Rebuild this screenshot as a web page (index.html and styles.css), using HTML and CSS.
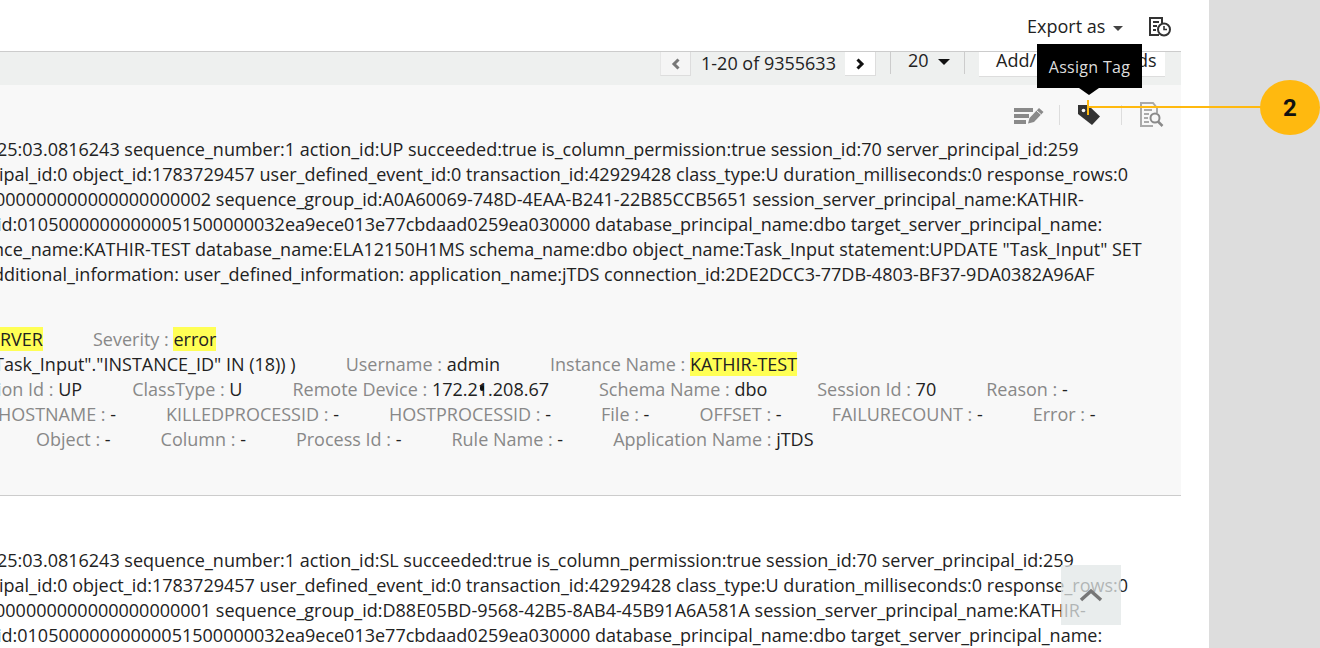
FILE: index.html
```html
<!DOCTYPE html>
<html lang="en">
<head>
<meta charset="utf-8">
<title>Log search</title>
<link rel="stylesheet" href="styles.css">
</head>
<body>
<div class="page">
  <main class="main">
    <header class="top">
      <span class="export">Export as <i class="caret"></i></span>
      <svg class="sched" width="24" height="22" viewBox="0 0 24 22"><path d="M11 19H2V2h12v5" fill="none" stroke="#333" stroke-width="2"/><path d="M5 6h6M5 10h4M5 14h3" stroke="#333" stroke-width="2"/><circle cx="16" cy="13.500" r="6" fill="#fff" stroke="#333" stroke-width="2"/><path d="M16 10v3.500h3" fill="none" stroke="#333" stroke-width="1.600"/></svg>
    </header>
    <div class="toolbar">
      <button class="pg pg-off"><svg width="10" height="12" viewBox="0 0 10 12"><path d="M7.500 1.500 3 6l4.500 4.500" fill="none" stroke="#777" stroke-width="3"/></svg></button>
      <span class="count">1-20 of 9355633</span>
      <button class="pg"><svg width="10" height="12" viewBox="0 0 10 12"><path d="M2.500 1.500 7 6l-4.500 4.500" fill="none" stroke="#111" stroke-width="3"/></svg></button>
      <span class="sep sep-a"></span>
      <span class="size">20<i class="caret caret-dark"></i></span>
      <span class="sep sep-b"></span>
      <button class="fields">Add/Remove Fields</button>
    </div>
    <section class="rec-a">
      <div class="actions">
        <svg class="edit" width="30" height="20" viewBox="0 0 30 20"><path d="M0 3h19v4H0zM0 9h15v4H0zM0 15h12v4H0z" fill="#8a8a8a"/><path d="M14 18.500l1.500-5.500L25 3l4.500 4-9.500 10z" fill="#8a8a8a"/><path d="M22.500 5.500l4.500 4" stroke="#f8f8f8" stroke-width="1"/></svg>
        <span class="vline"></span>
        <svg class="tag" width="24" height="24" viewBox="0 0 24 24"><path d="M1 2h10l12 11.500-8 8.500L1 11z" fill="#333"/><circle cx="6.500" cy="7.500" r="1.800" fill="#f8f8f8"/></svg>
        <span class="vline"></span>
        <svg width="26" height="28" viewBox="0 0 26 28"><path d="M14 25H2V2h12l4 5v5" fill="none" stroke="#aaa" stroke-width="2"/><path d="M5 9h8M5 13h5M5 17h4M5 21h5" stroke="#aaa" stroke-width="2"/><circle cx="16" cy="17" r="4.500" fill="none" stroke="#8a8a8a" stroke-width="2"/><path d="M19 20.500l4.500 4.500" stroke="#8a8a8a" stroke-width="2.500"/></svg>
      </div>
      <div class="msg">
        <p class="l1">25:03.0816243 sequence_number:1 action_id:UP succeeded:true is_column_permission:true session_id:70 server_principal_id:259</p>
        <p class="l2">ipal_id:0 object_id:1783729457 user_defined_event_id:0 transaction_id:42929428 class_type:U duration_milliseconds:0 response_rows:0</p>
        <p class="l3">000000000000000000002 sequence_group_id:A0A60069-748D-4EAA-B241-22B85CCB5651 session_server_principal_name:KATHIR-</p>
        <p class="l4">id:01050000000000051500000032ea9ece013e77cbdaad0259ea030000 database_principal_name:dbo target_server_principal_name:</p>
        <p class="l5">nce_name:KATHIR-TEST database_name:ELA12150H1MS schema_name:dbo object_name:Task_Input statement:UPDATE "Task_Input" SET</p>
        <p class="l6">dditional_information: user_defined_information: application_name:jTDS connection_id:2DE2DCC3-77DB-4803-BF37-9DA0382A96AF</p>
      </div>
      <div class="fieldset">
        <div class="row r1"><span><mark>RVER</mark></span><span><b>Severity : </b><mark>error</mark></span></div>
        <div class="row r2"><span>Task_Input"."INSTANCE_ID" IN (18)) )</span><span><b>Username : </b>admin</span><span><b>Instance Name : </b><mark>KATHIR-TEST</mark></span></div>
        <div class="row r3"><span><b>ion Id : </b>UP</span><span><b>ClassType : </b>U</span><span><b>Remote Device : </b>172.21.208.67</span><span><b>Schema Name : </b>dbo</span><span><b>Session Id : </b>70</span><span><b>Reason : </b>-</span></div>
        <div class="row"><span><b>HOSTNAME : </b>-</span><span><b>KILLEDPROCESSID : </b>-</span><span><b>HOSTPROCESSID : </b>-</span><span><b>File : </b>-</span><span><b>OFFSET : </b>-</span><span><b>FAILURECOUNT : </b>-</span><span><b>Error : </b>-</span></div>
        <div class="row r5"><span><b>Object : </b>-</span><span><b>Column : </b>-</span><span><b>Process Id : </b>-</span><span><b>Rule Name : </b>-</span><span><b>Application Name : </b>jTDS</span></div>
      </div>
    </section>
    <section class="rec-b">
      <div class="msg">
        <p class="l1">25:03.0816243 sequence_number:1 action_id:SL succeeded:true is_column_permission:true session_id:70 server_principal_id:259</p>
        <p class="l2">ipal_id:0 object_id:1783729457 user_defined_event_id:0 transaction_id:42929428 class_type:U duration_milliseconds:0 response_rows:0</p>
        <p class="l3">000000000000000000001 sequence_group_id:D88E05BD-9568-42B5-8AB4-45B91A6A581A session_server_principal_name:KATHIR-</p>
        <p class="l4">id:01050000000000051500000032ea9ece013e77cbdaad0259ea030000 database_principal_name:dbo target_server_principal_name:</p>
      </div>
    </section>
  </main>
  <aside class="rail"></aside>
</div>
<div class="speck"></div>
<div class="tip">Assign Tag</div>
<div class="leader"></div>
<div class="leader-v"></div>
<div class="badge">2</div>
<button class="totop"><svg width="24" height="14" viewBox="0 0 24 14"><path d="M2 12 12 3l10 9" fill="none" stroke="#777" stroke-width="3.500"/></svg></button>
</body>
</html>
```
FILE: styles.css
```css
* { box-sizing: border-box; }
html, body { margin: 0; height: 100%; overflow: hidden; }
body { font-family: "Open Sans", sans-serif; font-size: 18px; color: #222; background: #fff; }
.page { display: flex; height: 648px; }
.main { width: 1181px; flex: none; overflow: hidden; }
.rail { width: 111px; margin-left: 28px; background: #ddd; }
.top { height: 52px; display: flex; justify-content: flex-end; align-items: center; gap: 26px; padding: 0 9px 0 0; border-bottom: 1px solid #ccc; }
.sched { margin-top: 2px; }
.export { margin-right: -1px; }
.caret { display: inline-block; width: 0; height: 0; margin-left: 3px; vertical-align: 2px; border: 5px solid transparent; border-top-color: #444; border-bottom: 0; }
.caret-dark { border-top-color: #111; border-width: 6px; border-bottom: 0; margin-left: 9px; }
.toolbar { height: 33px; background: #eef0ef; display: flex; align-items: flex-start; padding-left: 660px; }
.pg { width: 31px; height: 24px; padding: 0; border: 0; border-right: 1px solid #ddd; border-bottom: 1px solid #ddd; background: #fff; display: flex; align-items: center; justify-content: center; }
.pg-off { background: #f5f5f5; border-left: 1px solid #e6e6e6; }
.count { width: 154px; padding-left: 10px; line-height: 22px; }
.sep { width: 1px; height: 22px; background: #ccc; }
.sep-a { margin-left: 14px; }
.sep-b { margin-left: 14px; }
.size { width: 59px; padding-left: 17px; line-height: 16px; white-space: nowrap; }
.fields { height: 25px; margin-left: 14px; width: 186px; border: 0; border-bottom: 1px solid #ddd; background: #fff; font: inherit; line-height: 16px; color: #222; text-align: left; padding: 0 0 8px 17px; }
.rec-a { height: 411px; background: #f8f8f8; border-bottom: 1px solid #ccc; }
.actions { height: 52px; display: flex; justify-content: flex-end; align-items: center; gap: 17px; padding: 8px 16px 0 0; }
.vline { width: 1px; height: 20px; background: #ddd; }
.edit { margin-right: -2px; }
.tag { margin-right: 3px; }
.msg p { margin: 0; line-height: 25px; white-space: nowrap; }
.msg .l1 { margin-left: -3px; }
.msg .l2 { margin-left: -1px; }
.msg .l3 { margin-left: -5px; }
.msg .l4 { margin-left: -3px; }
.msg .l5 { margin-left: -7px; }
.msg .l6 { margin-left: -7px; }
.fieldset { margin-top: 40px; margin-left: -2px; }
.row { display: flex; gap: 50px; line-height: 25px; white-space: nowrap; }
.r1 { margin-left: 2px; }
.r2 { margin-left: -4px; }
.r3 { margin-left: -1px; }
.r5 { padding-left: 38px; }
.row b { font-weight: 400; color: #888; }
mark { background: #ffff55; color: #222; }
.rec-b { padding-top: 52px; }
.speck { position: absolute; left: 480px; top: 385px; width: 4px; height: 6px; border-radius: 2px; background: #111; }
.tip { position: absolute; left: 1037px; top: 44px; width: 105px; height: 44px; background: #000; color: #ddd; font-size: 16px; letter-spacing: .3px; line-height: 46px; text-align: center; }
.tip::after { content: ""; position: absolute; left: 42px; top: 44px; border: 10px solid transparent; border-top: 7px solid #000; border-bottom: 0; }
.leader { position: absolute; left: 1088px; top: 106px; width: 180px; height: 2px; background: #ffb90f; }
.leader-v { position: absolute; left: 1087px; top: 100px; width: 2px; height: 15px; background: #ffb90f; }
.badge { position: absolute; left: 1260px; top: 80px; width: 60px; height: 55px; border-radius: 50%; background: #ffb90f; color: #111; font-family: Roboto, sans-serif; font-size: 24px; font-weight: 700; line-height: 57px; text-align: center; }
.totop { position: absolute; left: 1061px; top: 565px; width: 60px; height: 60px; border: 0; padding: 0; background: rgba(225, 231, 231, .75); display: flex; align-items: center; justify-content: center; }
```
